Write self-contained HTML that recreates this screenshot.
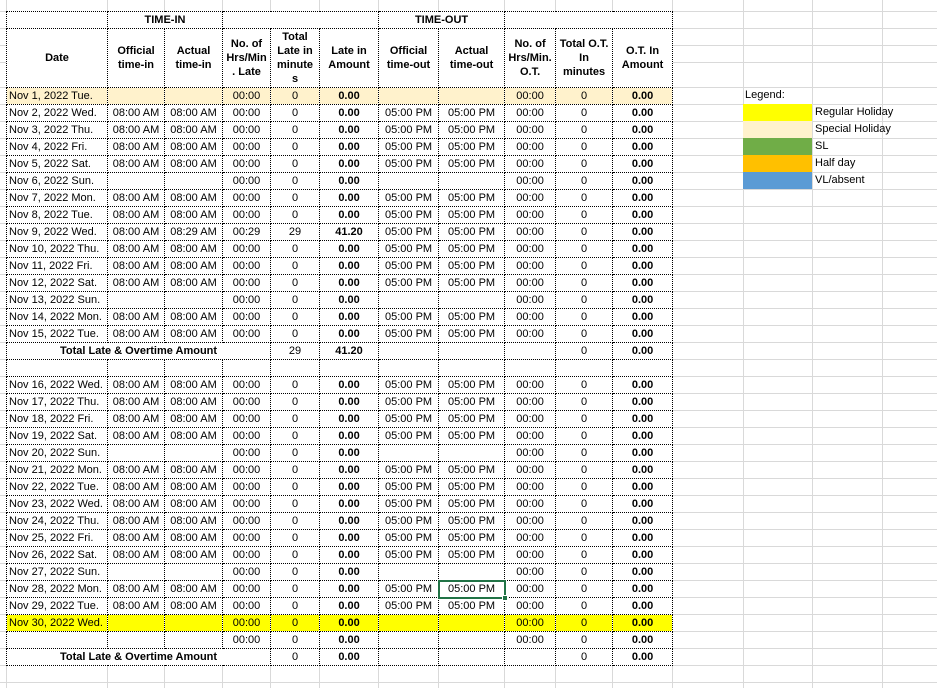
<!DOCTYPE html>
<html><head><meta charset="utf-8"><style>
html,body{margin:0;padding:0;width:937px;height:688px;overflow:hidden;background:#fff;font-family:"Liberation Sans",Arial,sans-serif;font-size:11px;color:#000}
.v{position:absolute;top:0;width:1px;height:688px;background:#d9d9d9}
.hl{position:absolute;left:0;width:937px;height:1px;background:#d9d9d9}
.hg{position:absolute;left:0;top:87px;width:937px;height:601px;background:repeating-linear-gradient(to bottom,#d9d9d9 0 1px,transparent 1px 17px)}
table{position:absolute;left:6px;top:11px;border-collapse:collapse;table-layout:fixed;width:667px;background:#fff}
td{border:1px dotted #000;padding:0;height:16px;line-height:15px;text-align:center;white-space:nowrap;overflow:hidden}
tr{height:17px}
td.d{text-align:left;padding-left:2px}
td.b{font-weight:bold}
tr.h td{font-weight:bold;line-height:14px}
tr.sp td{background:#fff2cc}
tr.rg td{background:#ffff00}
td.sel{outline:2px solid #217346;outline-offset:-1px;position:relative}
.lg{position:absolute;left:743px;width:69px;height:17px}
.lt{position:absolute;left:815px;font-size:11px;line-height:17px}
</style></head><body>
<div class="hg"></div>
<div class="hl" style="top:11px"></div><div class="hl" style="top:28px"></div><div class="hl" style="top:45px"></div><div class="hl" style="top:62px"></div>
<div class="v" style="left:6px"></div><div class="v" style="left:107px"></div><div class="v" style="left:164px"></div><div class="v" style="left:222px"></div><div class="v" style="left:270px"></div><div class="v" style="left:319px"></div><div class="v" style="left:378px"></div><div class="v" style="left:438px"></div><div class="v" style="left:504px"></div><div class="v" style="left:555px"></div><div class="v" style="left:612px"></div><div class="v" style="left:672px"></div><div class="v" style="left:743px"></div><div class="v" style="left:812px"></div><div class="v" style="left:882px"></div>

<div class="lt" style="left:745px;top:87px">Legend:</div>
<div class="lg" style="top:104px;background:#ffff00"></div><div class="lt" style="top:104px">Regular Holiday</div>
<div class="lg" style="top:121px;background:#fff2cc"></div><div class="lt" style="top:121px">Special Holiday</div>
<div class="lg" style="top:138px;background:#70ad47"></div><div class="lt" style="top:138px">SL</div>
<div class="lg" style="top:155px;background:#ffc000"></div><div class="lt" style="top:155px">Half day</div>
<div class="lg" style="top:172px;background:#5b9bd5"></div><div class="lt" style="top:172px">VL/absent</div>

<table>
<colgroup><col style="width:101px"><col style="width:57px"><col style="width:58px"><col style="width:48px"><col style="width:49px"><col style="width:59px"><col style="width:60px"><col style="width:66px"><col style="width:51px"><col style="width:57px"><col style="width:60px"></colgroup>
<tr class="h"><td></td><td colspan="2">TIME-IN</td><td colspan="3"></td><td colspan="2">TIME-OUT</td><td colspan="3"></td></tr>
<tr class="h" style="height:59px"><td style="height:58px">Date</td><td>Official<br>time-in</td><td>Actual<br>time-in</td><td>No. of<br>Hrs/Min<br>. Late</td><td>Total<br>Late in<br>minute<br>s</td><td>Late in<br>Amount</td><td>Official<br>time-out</td><td>Actual<br>time-out</td><td>No. of<br>Hrs/Min.<br>O.T.</td><td>Total O.T.<br>In<br>minutes</td><td>O.T. In<br>Amount</td></tr>
<tr class="sp"><td class="d">Nov 1, 2022 Tue.</td><td></td><td></td><td>00:00</td><td>0</td><td class="b">0.00</td><td></td><td></td><td>00:00</td><td>0</td><td class="b">0.00</td></tr>
<tr><td class="d">Nov 2, 2022 Wed.</td><td>08:00 AM</td><td>08:00 AM</td><td>00:00</td><td>0</td><td class="b">0.00</td><td>05:00 PM</td><td>05:00 PM</td><td>00:00</td><td>0</td><td class="b">0.00</td></tr>
<tr><td class="d">Nov 3, 2022 Thu.</td><td>08:00 AM</td><td>08:00 AM</td><td>00:00</td><td>0</td><td class="b">0.00</td><td>05:00 PM</td><td>05:00 PM</td><td>00:00</td><td>0</td><td class="b">0.00</td></tr>
<tr><td class="d">Nov 4, 2022 Fri.</td><td>08:00 AM</td><td>08:00 AM</td><td>00:00</td><td>0</td><td class="b">0.00</td><td>05:00 PM</td><td>05:00 PM</td><td>00:00</td><td>0</td><td class="b">0.00</td></tr>
<tr><td class="d">Nov 5, 2022 Sat.</td><td>08:00 AM</td><td>08:00 AM</td><td>00:00</td><td>0</td><td class="b">0.00</td><td>05:00 PM</td><td>05:00 PM</td><td>00:00</td><td>0</td><td class="b">0.00</td></tr>
<tr><td class="d">Nov 6, 2022 Sun.</td><td></td><td></td><td>00:00</td><td>0</td><td class="b">0.00</td><td></td><td></td><td>00:00</td><td>0</td><td class="b">0.00</td></tr>
<tr><td class="d">Nov 7, 2022 Mon.</td><td>08:00 AM</td><td>08:00 AM</td><td>00:00</td><td>0</td><td class="b">0.00</td><td>05:00 PM</td><td>05:00 PM</td><td>00:00</td><td>0</td><td class="b">0.00</td></tr>
<tr><td class="d">Nov 8, 2022 Tue.</td><td>08:00 AM</td><td>08:00 AM</td><td>00:00</td><td>0</td><td class="b">0.00</td><td>05:00 PM</td><td>05:00 PM</td><td>00:00</td><td>0</td><td class="b">0.00</td></tr>
<tr><td class="d">Nov 9, 2022 Wed.</td><td>08:00 AM</td><td>08:29 AM</td><td>00:29</td><td>29</td><td class="b">41.20</td><td>05:00 PM</td><td>05:00 PM</td><td>00:00</td><td>0</td><td class="b">0.00</td></tr>
<tr><td class="d">Nov 10, 2022 Thu.</td><td>08:00 AM</td><td>08:00 AM</td><td>00:00</td><td>0</td><td class="b">0.00</td><td>05:00 PM</td><td>05:00 PM</td><td>00:00</td><td>0</td><td class="b">0.00</td></tr>
<tr><td class="d">Nov 11, 2022 Fri.</td><td>08:00 AM</td><td>08:00 AM</td><td>00:00</td><td>0</td><td class="b">0.00</td><td>05:00 PM</td><td>05:00 PM</td><td>00:00</td><td>0</td><td class="b">0.00</td></tr>
<tr><td class="d">Nov 12, 2022 Sat.</td><td>08:00 AM</td><td>08:00 AM</td><td>00:00</td><td>0</td><td class="b">0.00</td><td>05:00 PM</td><td>05:00 PM</td><td>00:00</td><td>0</td><td class="b">0.00</td></tr>
<tr><td class="d">Nov 13, 2022 Sun.</td><td></td><td></td><td>00:00</td><td>0</td><td class="b">0.00</td><td></td><td></td><td>00:00</td><td>0</td><td class="b">0.00</td></tr>
<tr><td class="d">Nov 14, 2022 Mon.</td><td>08:00 AM</td><td>08:00 AM</td><td>00:00</td><td>0</td><td class="b">0.00</td><td>05:00 PM</td><td>05:00 PM</td><td>00:00</td><td>0</td><td class="b">0.00</td></tr>
<tr><td class="d">Nov 15, 2022 Tue.</td><td>08:00 AM</td><td>08:00 AM</td><td>00:00</td><td>0</td><td class="b">0.00</td><td>05:00 PM</td><td>05:00 PM</td><td>00:00</td><td>0</td><td class="b">0.00</td></tr>
<tr><td colspan="4" class="b">Total Late &amp; Overtime Amount</td><td>29</td><td class="b">41.20</td><td></td><td></td><td></td><td>0</td><td class="b">0.00</td></tr>
<tr><td></td><td></td><td></td><td></td><td></td><td></td><td></td><td></td><td></td><td></td><td></td></tr>
<tr><td class="d">Nov 16, 2022 Wed.</td><td>08:00 AM</td><td>08:00 AM</td><td>00:00</td><td>0</td><td class="b">0.00</td><td>05:00 PM</td><td>05:00 PM</td><td>00:00</td><td>0</td><td class="b">0.00</td></tr>
<tr><td class="d">Nov 17, 2022 Thu.</td><td>08:00 AM</td><td>08:00 AM</td><td>00:00</td><td>0</td><td class="b">0.00</td><td>05:00 PM</td><td>05:00 PM</td><td>00:00</td><td>0</td><td class="b">0.00</td></tr>
<tr><td class="d">Nov 18, 2022 Fri.</td><td>08:00 AM</td><td>08:00 AM</td><td>00:00</td><td>0</td><td class="b">0.00</td><td>05:00 PM</td><td>05:00 PM</td><td>00:00</td><td>0</td><td class="b">0.00</td></tr>
<tr><td class="d">Nov 19, 2022 Sat.</td><td>08:00 AM</td><td>08:00 AM</td><td>00:00</td><td>0</td><td class="b">0.00</td><td>05:00 PM</td><td>05:00 PM</td><td>00:00</td><td>0</td><td class="b">0.00</td></tr>
<tr><td class="d">Nov 20, 2022 Sun.</td><td></td><td></td><td>00:00</td><td>0</td><td class="b">0.00</td><td></td><td></td><td>00:00</td><td>0</td><td class="b">0.00</td></tr>
<tr><td class="d">Nov 21, 2022 Mon.</td><td>08:00 AM</td><td>08:00 AM</td><td>00:00</td><td>0</td><td class="b">0.00</td><td>05:00 PM</td><td>05:00 PM</td><td>00:00</td><td>0</td><td class="b">0.00</td></tr>
<tr><td class="d">Nov 22, 2022 Tue.</td><td>08:00 AM</td><td>08:00 AM</td><td>00:00</td><td>0</td><td class="b">0.00</td><td>05:00 PM</td><td>05:00 PM</td><td>00:00</td><td>0</td><td class="b">0.00</td></tr>
<tr><td class="d">Nov 23, 2022 Wed.</td><td>08:00 AM</td><td>08:00 AM</td><td>00:00</td><td>0</td><td class="b">0.00</td><td>05:00 PM</td><td>05:00 PM</td><td>00:00</td><td>0</td><td class="b">0.00</td></tr>
<tr><td class="d">Nov 24, 2022 Thu.</td><td>08:00 AM</td><td>08:00 AM</td><td>00:00</td><td>0</td><td class="b">0.00</td><td>05:00 PM</td><td>05:00 PM</td><td>00:00</td><td>0</td><td class="b">0.00</td></tr>
<tr><td class="d">Nov 25, 2022 Fri.</td><td>08:00 AM</td><td>08:00 AM</td><td>00:00</td><td>0</td><td class="b">0.00</td><td>05:00 PM</td><td>05:00 PM</td><td>00:00</td><td>0</td><td class="b">0.00</td></tr>
<tr><td class="d">Nov 26, 2022 Sat.</td><td>08:00 AM</td><td>08:00 AM</td><td>00:00</td><td>0</td><td class="b">0.00</td><td>05:00 PM</td><td>05:00 PM</td><td>00:00</td><td>0</td><td class="b">0.00</td></tr>
<tr><td class="d">Nov 27, 2022 Sun.</td><td></td><td></td><td>00:00</td><td>0</td><td class="b">0.00</td><td></td><td></td><td>00:00</td><td>0</td><td class="b">0.00</td></tr>
<tr><td class="d">Nov 28, 2022 Mon.</td><td>08:00 AM</td><td>08:00 AM</td><td>00:00</td><td>0</td><td class="b">0.00</td><td>05:00 PM</td><td class="sel">05:00 PM</td><td>00:00</td><td>0</td><td class="b">0.00</td></tr>
<tr><td class="d">Nov 29, 2022 Tue.</td><td>08:00 AM</td><td>08:00 AM</td><td>00:00</td><td>0</td><td class="b">0.00</td><td>05:00 PM</td><td>05:00 PM</td><td>00:00</td><td>0</td><td class="b">0.00</td></tr>
<tr class="rg"><td class="d">Nov 30, 2022 Wed.</td><td></td><td></td><td>00:00</td><td>0</td><td class="b">0.00</td><td></td><td></td><td>00:00</td><td>0</td><td class="b">0.00</td></tr>
<tr><td></td><td></td><td></td><td>00:00</td><td>0</td><td class="b">0.00</td><td></td><td></td><td>00:00</td><td>0</td><td class="b">0.00</td></tr>
<tr><td colspan="4" class="b">Total Late &amp; Overtime Amount</td><td>0</td><td class="b">0.00</td><td></td><td></td><td></td><td>0</td><td class="b">0.00</td></tr>
</table>
<div style="position:absolute;left:502px;top:595px;width:4px;height:4px;background:#217346;border:1px solid #fff"></div>
</body></html>
